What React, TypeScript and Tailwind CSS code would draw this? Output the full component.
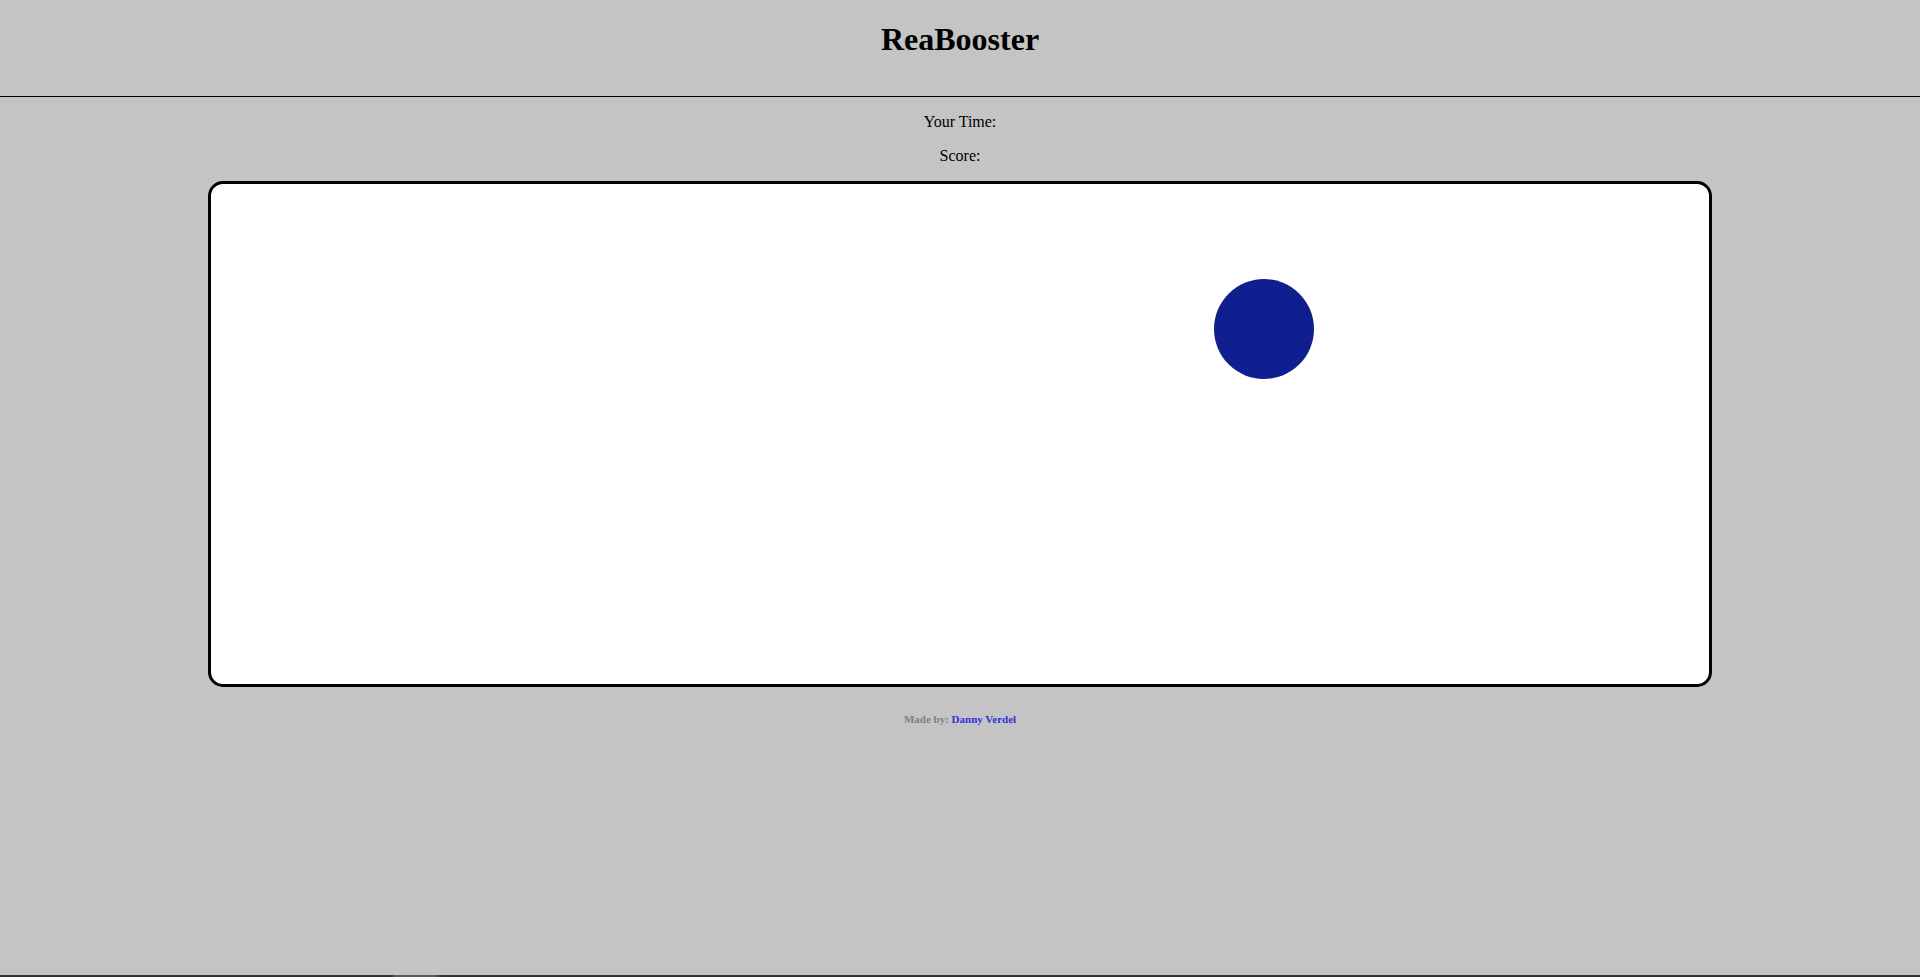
import React from 'react';

const App: React.FC = () => {
  return (
    <div className="min-h-screen flex flex-col bg-[#c4c4c4] text-black font-['Liberation_Serif','Times_New_Roman',serif]">
      <header className="pt-[21px] pb-[38px]">
        <h1 className="text-center text-[32px] leading-[37px] font-bold">ReaBooster</h1>
      </header>
      <hr className="border-0 h-px bg-black" />

      <div className="flex flex-col items-center pt-[16px] text-[16px] leading-[18px]">
        <p>Your Time:</p>
        <p className="mt-[16px]">Score:</p>
      </div>

      <GameBoard />

      <footer className="mt-[26px] text-center text-[11px] leading-[13px] font-bold">
        <span className="text-[#808080]">Made by: </span>
        <a href="#" className="text-[#3030e0]">Danny Verdel</a>
      </footer>

      <div className="mt-auto h-[2px] bg-[#333333] flex">
        <div className="ml-[393px] w-[44px] bg-[#5a5a5a]" />
        <div className="ml-[1px] w-[3px] bg-[#444444]" />
      </div>
    </div>
  );
};

const GameBoard: React.FC = () => {
  return (
    <div className="mt-[16px] mx-auto w-[1504px] h-[506px] bg-white border-[3px] border-black rounded-[15px] relative">
      <div className="absolute left-[1003px] top-[95px] w-[100px] h-[100px] rounded-full bg-[#101f8f]" />
    </div>
  );
};

export default App;
